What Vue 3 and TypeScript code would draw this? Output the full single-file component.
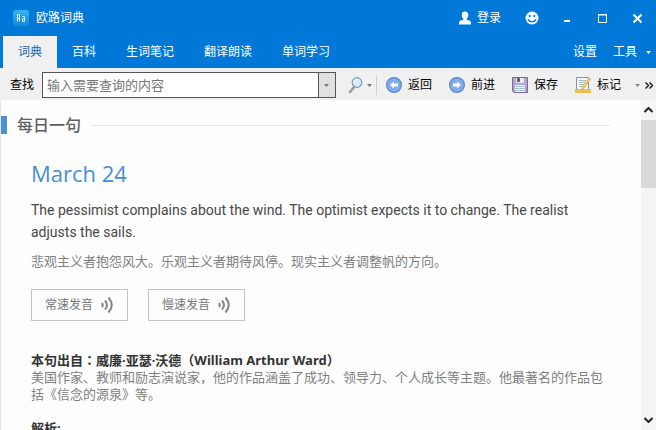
<script setup lang="ts">
import { ref } from 'vue'

const tabs: string[] = ['词典', '百科', '生词笔记', '翻译朗读', '单词学习']
const activeTab = ref<string>('词典')
const query = ref<string>('')
const pronunciations: string[] = ['常速发音', '慢速发音']
</script>

<template>
  <div class="window">
    <header class="titlebar">
      <svg class="logo" width="16" height="16" viewBox="0 0 16 16" aria-hidden="true">
        <defs>
          <linearGradient id="logo-fill" x1="0" y1="0" x2="0" y2="1">
            <stop offset="0" stop-color="#35b4ef" />
            <stop offset="1" stop-color="#1588dc" />
          </linearGradient>
        </defs>
        <rect width="16" height="16" rx="3" fill="url(#logo-fill)" />
        <g fill="none" stroke="#e6f6ff" stroke-width="1">
          <path d="M4.500 11.500v-7h2v7M4.500 8.500h2" />
          <path d="M9.500 6.500h2v5h-2v-2.500h2" />
        </g>
      </svg>
      <span class="app-name">欧路词典</span>
      <button class="plain login" type="button">
        <svg width="14" height="14" viewBox="0 0 14 14" aria-hidden="true">
          <path fill="#fff" d="M7 .5a3.300 3.600 0 0 1 3.300 3.700c0 1.500-.7 2.900-1.700 3.500v1c2.600.6 4.400 1.300 4.400 2.800v2H1v-2c0-1.500 1.800-2.200 4.400-2.800v-1C4.400 7.100 3.700 5.700 3.700 4.200A3.300 3.600 0 0 1 7 .5z" />
        </svg>
        <span>登录</span>
      </button>
      <button class="plain" type="button" aria-label="反馈">
        <svg width="14" height="14" viewBox="0 0 14 14" aria-hidden="true">
          <circle cx="7" cy="7" r="6.500" fill="#fff" />
          <ellipse cx="4.700" cy="5" rx="1" ry="1.300" fill="#0078d7" />
          <ellipse cx="9.300" cy="5" rx="1" ry="1.300" fill="#0078d7" />
          <path d="M3 8.200c1.300 3.300 6.700 3.300 8 0" fill="none" stroke="#0078d7" stroke-width="1.300" />
        </svg>
      </button>
      <div class="window-controls">
        <button class="plain" type="button" aria-label="最小化">
          <svg width="11" height="11" viewBox="0 0 11 11"><path d="M2 7h6v2H2z" fill="#fff" /></svg>
        </button>
        <button class="plain" type="button" aria-label="最大化">
          <svg width="11" height="11" viewBox="0 0 11 11"><path d="M1.500 1.500h8v8h-8zM1 2h9" fill="none" stroke="#fff" /></svg>
        </button>
        <button class="plain" type="button" aria-label="关闭">
          <svg width="11" height="11" viewBox="0 0 11 11"><path d="M1.500 1.500l8 8M9.500 1.500l-8 8" stroke="#fff" stroke-width="2" /></svg>
        </button>
      </div>
    </header>

    <nav class="tabs">
      <button
        v-for="tab in tabs"
        :key="tab"
        class="tab"
        :class="{ active: tab === activeTab }"
        type="button"
        @click="activeTab = tab"
      >{{ tab }}</button>
      <div class="menus">
        <button class="plain" type="button">设置</button>
        <button class="plain tools" type="button">
          工具
          <svg width="5" height="3" viewBox="0 0 5 3"><path d="M0 0h5L2.500 3z" fill="#fff" /></svg>
        </button>
      </div>
    </nav>

    <form class="toolbar" @submit.prevent>
      <label for="query">查找</label>
      <div class="search-box">
        <input id="query" v-model="query" type="text" placeholder="输入需要查询的内容" />
        <button class="history" type="button" aria-label="历史">
          <svg width="5" height="3" viewBox="0 0 5 3"><path d="M0 0h5L2.500 3z" fill="#777" /></svg>
        </button>
      </div>
      <button class="tool search" type="submit" aria-label="搜索">
        <svg width="16" height="18" viewBox="0 0 16 18">
          <path d="M6.500 10.500L2 16" stroke="#8e99a5" stroke-width="2.400" stroke-linecap="round" />
          <circle cx="9" cy="6.500" r="4.800" fill="#d4effc" stroke="#8199b0" stroke-width="1.200" />
          <path d="M6 6.500c0-2 1.500-3 3-3" fill="none" stroke="#fff" />
        </svg>
        <svg width="5" height="3" viewBox="0 0 5 3"><path d="M0 0h5L2.500 3z" fill="#777" /></svg>
      </button>
      <span class="separator"></span>
      <div class="actions">
        <button class="tool" type="button">
          <svg width="16" height="16" viewBox="0 0 16 16">
            <circle cx="8" cy="8" r="7.400" fill="#83aced" stroke="#6285c4" stroke-width="1.200" />
            <path d="M4 8l4-3.500v2h4v3H8v2z" fill="#fff" />
          </svg>
          <span>返回</span>
        </button>
        <button class="tool" type="button">
          <svg width="16" height="16" viewBox="0 0 16 16">
            <circle cx="8" cy="8" r="7.400" fill="#83aced" stroke="#6285c4" stroke-width="1.200" />
            <path d="M12 8L8 4.500v2H4v3h4v2z" fill="#fff" />
          </svg>
          <span>前进</span>
        </button>
        <button class="tool" type="button">
          <svg width="16" height="16" viewBox="0 0 16 16">
            <path d="M.5.500h15v15H2l-1.500-1.500z" fill="#b0a5d3" stroke="#76699f" />
            <path d="M4 1h8v5H4z" fill="#e9eaf4" />
            <path d="M5 1h3v4H5z" fill="#665a8e" />
            <path d="M3 8h10v7H3z" fill="#f4fafc" />
            <path d="M3 9.500h10M3 11.500h10M3 13.500h10" stroke="#9cc7d2" />
          </svg>
          <span>保存</span>
        </button>
        <button class="tool" type="button">
          <svg width="16" height="16" viewBox="0 0 16 16">
            <path d="M1.500.500h12v13h-12z" fill="#f5f8fc" stroke="#8291a9" />
            <path d="M4 3.500h7M4 5.500h6M4 7.500h5M4 9.500h3" stroke="#a9b7ca" />
            <path d="M0 12h16v4H0z" fill="#edbd53" />
            <path d="M14 1l1.500 1-6 9-2.500 1.500.5-3z" fill="#f6cf4c" stroke="#c69d46" stroke-width=".6" />
          </svg>
          <span>标记</span>
        </button>
      </div>
      <button class="tool overflow" type="button" aria-label="更多">
        <svg width="5" height="3" viewBox="0 0 5 3"><path d="M0 0h5L2.500 3z" fill="#888" /></svg>
        <svg width="8" height="7" viewBox="0 0 8 7"><path d="M.5.500l3 3-3 3M4.500.500l3 3-3 3" fill="none" stroke="#111" stroke-width="1.400" /></svg>
      </button>
    </form>

    <div class="body">
      <main class="page">
        <div class="section-head">
          <h1>每日一句</h1>
        </div>
        <article class="daily">
          <h2>March 24</h2>
          <p class="quote">The pessimist complains about the wind. The optimist expects it to change. The realist adjusts the sails.</p>
          <p class="translation">悲观主义者抱怨风大。乐观主义者期待风停。现实主义者调整帆的方向。</p>
          <div class="voices">
            <button v-for="label in pronunciations" :key="label" class="voice" type="button">
              <span>{{ label }}</span>
              <svg width="14" height="18" viewBox="0 0 14 18" aria-hidden="true">
                <g fill="none" stroke="#858585" stroke-width="2">
                  <path d="M2 7q1.500 2 0 4" />
                  <path d="M5 4.500q4 4.500 0 9" />
                  <path d="M8.500 1.500q6.500 7.500 0 15" />
                </g>
              </svg>
            </button>
          </div>
          <h3>本句出自<span class="colon">：</span>威廉·亚瑟·沃德（William Arthur Ward）</h3>
          <p class="note">美国作家、教师和励志演说家，他的作品涵盖了成功、领导力、个人成长等主题。他最著名的作品包括《信念的源泉》等。</p>
          <h3 class="analysis">解析:</h3>
        </article>
      </main>
      <div class="scrollbar">
        <button class="plain arrow" type="button" aria-label="向上滚动">
          <svg width="9" height="6" viewBox="0 0 9 6"><path d="M.5 5l4-4 4 4" fill="none" stroke="#222" stroke-width="2" /></svg>
        </button>
        <div class="thumb"></div>
        <button class="plain arrow" type="button" aria-label="向下滚动">
          <svg width="9" height="6" viewBox="0 0 9 6"><path d="M.5 1l4 4 4-4" fill="none" stroke="#222" stroke-width="2" /></svg>
        </button>
      </div>
    </div>
  </div>
</template>

<style>
body {
  overflow: hidden;
}
</style>

<style scoped>
.window {
  display: flex;
  flex-direction: column;
  height: 100vh;
  background: #fdfdfd;
  color: #000;
  font: 12px/16px "Noto Sans", "Noto Sans CJK SC", sans-serif;
}

.window *,
.window {
  box-sizing: border-box;
}

button,
input {
  margin: 0;
  padding: 0;
  border: 0;
  background: none;
  color: inherit;
  font: inherit;
}

svg {
  display: block;
  flex: none;
}

h1,
h2,
h3,
p {
  margin: 0;
}

.titlebar {
  display: flex;
  align-items: center;
  flex: none;
  height: 36px;
  padding: 0 13px 0 13px;
  background: #0078d7;
  color: #fff;
}

.plain {
  display: flex;
  align-items: center;
  justify-content: center;
}

.app-name {
  flex: 1;
  margin-left: 7px;
}

.login {
  gap: 5px;
  margin-right: 24px;
}

.window-controls {
  display: flex;
  gap: 24px;
  margin-left: 23px;
}

.tabs {
  display: flex;
  flex: none;
  height: 32px;
  padding: 0 5px 0 3px;
  background: #0078d7;
  color: #fff;
}

.tab {
  padding: 0 15px;
  white-space: nowrap;
}

.tab.active {
  background: #f0f0f0;
  color: #1267b4;
}

.menus {
  display: flex;
  gap: 16px;
  margin-left: auto;
}

.tools {
  gap: 9px;
}

.toolbar {
  display: flex;
  align-items: center;
  flex: none;
  height: 32px;
  padding: 2px 3px 0 10px;
  background: #f0f0f0;
  white-space: nowrap;
}

.search-box {
  display: flex;
  flex: 1;
  min-width: 0;
  height: 26px;
  margin: 0 12px 0 8px;
  border: 1px solid #555;
  background: #fff;
}

.search-box input {
  flex: 1;
  min-width: 0;
  padding: 0 4px;
  outline: none;
  font-size: 13px;
}

.search-box input::placeholder {
  color: #777;
  opacity: 1;
}

.history {
  display: flex;
  align-items: center;
  justify-content: center;
  width: 17px;
  border-left: 1px solid #555;
  background: #e1e1e1;
}

.tool {
  display: flex;
  align-items: center;
  gap: 6px;
}

.search {
  gap: 3px;
}

.separator {
  width: 1px;
  height: 20px;
  margin: 0 9px 0 4px;
  background: #d0d0d0;
}

.actions {
  display: flex;
  gap: 17px;
}

.overflow {
  gap: 5px;
  margin-left: 14px;
}

.body {
  display: flex;
  flex: 1;
  min-height: 0;
}

.page {
  flex: 1;
  min-width: 0;
  overflow-y: auto;
  scrollbar-width: none;
  padding: 16px 31px 16px 0;
  border-left: 1px solid #e4e4e4;
}

.section-head {
  display: flex;
  align-items: center;
  gap: 10px;
  height: 18px;
}

.section-head::before {
  width: 6px;
  height: 18px;
  background: #4a90d9;
  content: "";
}

.section-head::after {
  flex: 1;
  height: 1px;
  background: #e6e6e6;
  content: "";
}

h1 {
  color: #606060;
  font-size: 16px;
  font-weight: 500;
  line-height: 18px;
}

.daily {
  padding: 23px 0 0 30px;
}

h2 {
  color: #4a8fd0;
  font-family: "Open Sans", sans-serif;
  font-size: 22px;
  font-weight: 400;
  line-height: 32px;
}

.quote {
  margin-top: 10px;
  color: #484848;
  font-family: Roboto, "Open Sans", sans-serif;
  font-size: 14px;
  line-height: 22px;
}

.translation {
  margin-top: 10px;
  color: #808080;
  font-size: 13px;
  line-height: 17px;
}

.voices {
  display: flex;
  gap: 20px;
  margin: 19px 0 30px;
}

.voice {
  display: flex;
  align-items: center;
  gap: 7px;
  height: 32px;
  padding: 0 13px;
  border: 1px solid #c4c4c4;
  color: #777;
}

h3 {
  color: #333;
  font-size: 13px;
  font-weight: 700;
  line-height: 17px;
}

.colon {
  font-family: "Noto Sans CJK JP", sans-serif;
}

.note {
  color: #808080;
  font-size: 13px;
  line-height: 17px;
}

.analysis {
  margin-top: 17px;
}

.scrollbar {
  display: flex;
  flex-direction: column;
  width: 15px;
  background: #f5f5f5;
}

.arrow {
  height: 20px;
}

.thumb {
  height: 68px;
  margin-bottom: auto;
  background: #d9d9d9;
}
</style>
